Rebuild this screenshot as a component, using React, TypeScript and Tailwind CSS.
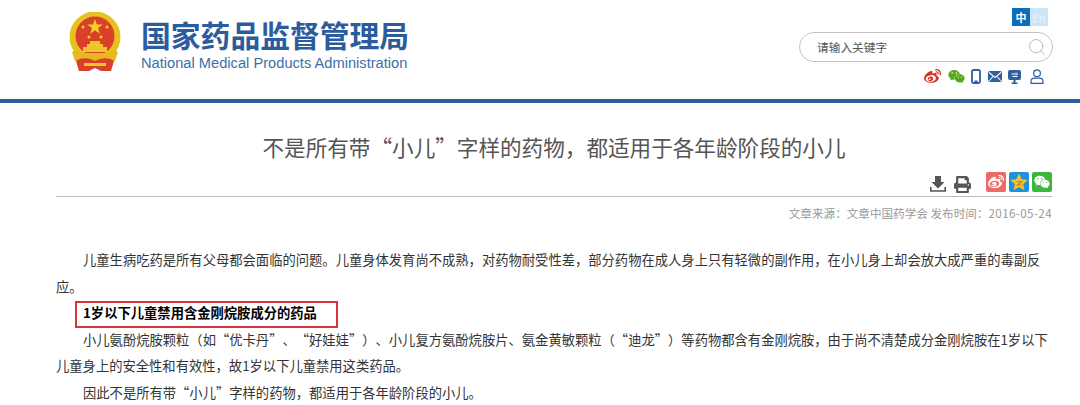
import React from 'react';
import { FaWeibo, FaWeixin, FaPrint } from 'react-icons/fa';
import { Search } from 'lucide-react';

const cjk = "font-['Noto_Sans_CJK_SC','Liberation_Sans',sans-serif]";

const Emblem = () => (
  <svg width="54" height="60" viewBox="0 0 54 60">
    <circle cx="26" cy="25" r="25.5" fill="#e6c21f" />
    <circle cx="26" cy="24" r="19.5" fill="#d8402a" />
    <path d="M26 7l1.900 5.600h5.900l-4.800 3.500 1.800 5.600-4.800-3.500-4.800 3.500 1.800-5.600-4.800-3.500h5.900z" fill="#f3d02c" />
    <circle cx="14" cy="15" r="1.500" fill="#f3d02c" />
    <circle cx="38" cy="15" r="1.500" fill="#f3d02c" />
    <circle cx="20" cy="25" r="1.500" fill="#f3d02c" />
    <circle cx="32" cy="25" r="1.500" fill="#f3d02c" />
    <path d="M21 29h10v3h3v3h4v5H14v-5h4v-3h3z" fill="#efc62a" />
    <path d="M12 41h28l3-4 6 3-3 9H6L3 40l6-3z" fill="#e8b820" />
    <path d="M7 49c6-4 13-3 19 0 6-3 13-4 19 0l-3 10H32l-6-3-6 3H10z" fill="#d8402a" />
    <path d="M15 51h22v3H15z" fill="#efc62a" />
  </svg>
);

const MobileIcon = () => (
  <svg width="10" height="15" viewBox="0 0 10 15">
    <rect x="1" y="1" width="8" height="13" rx="1.500" fill="none" stroke="#2f5f9e" strokeWidth="1.800" />
    <rect x="3.500" y="11.500" width="3" height="1.500" fill="#2f5f9e" />
  </svg>
);

const MailIcon = () => (
  <svg width="14" height="11" viewBox="0 0 14 11">
    <rect width="14" height="11" rx="2" fill="#2f5f9e" />
    <path d="M1 1.500l6 5 6-5M1 10l4-4.500M13 10L9 5.500" fill="none" stroke="#fff" strokeWidth="1.100" />
  </svg>
);

const ScreenIcon = () => (
  <svg width="13" height="14" viewBox="0 0 13 14">
    <rect width="13" height="10" rx="2" fill="#2f5f9e" />
    <path d="M3.500 4h5M8 2.500L9.500 4 8 5.500M9.500 6.500h-5" fill="none" stroke="#fff" strokeWidth="1" />
    <path d="M5.500 10h2v2.500h2V14h-6v-1.500h2z" fill="#2f5f9e" />
  </svg>
);

const UserIcon = () => (
  <svg width="14" height="15" viewBox="0 0 14 15">
    <circle cx="7" cy="4.200" r="3.400" fill="none" stroke="#2f5f9e" strokeWidth="1.200" />
    <path d="M1 14.300v-1.800c0-2 1.600-3.300 3.500-3.300h5c1.900 0 3.500 1.300 3.500 3.300v1.800z" fill="none" stroke="#2f5f9e" strokeWidth="1.200" />
  </svg>
);

const DownloadIcon = () => (
  <svg width="16" height="16" viewBox="0 0 16 16">
    <path d="M5 0h6v6h3.500L8 12.500 1.500 6H5z" fill="#555" />
    <path d="M0.800 11v4h14.400v-4" fill="none" stroke="#555" strokeWidth="1.600" />
  </svg>
);

const QzoneIcon = () => (
  <svg width="20" height="20" viewBox="0 0 20 20">
    <path d="M10 1.500l2.600 5.700 6.200.7-4.600 4.200 1.200 6.100L10 15.200l-5.400 3 1.200-6.100L1.200 7.900l6.200-.7z" fill="#f2c230" />
    <path d="M7.500 9.500h5l-4 3.500h4.500" fill="none" stroke="#c8861c" strokeWidth="1.200" />
  </svg>
);

export default function App() {
  return (
    <div className={`w-[1080px] h-[405px] overflow-hidden bg-white ${cjk}`}>
      {/* Header */}
      <header className="h-[103px] border-b-4 border-[#2f5f9e] pl-[69px] pr-[27px] flex justify-between">
        <div className="flex items-start pt-[12px]">
          <Emblem />
          <div className="ml-[18px] -mt-[1px]">
            <div className="text-[29.800px] leading-[46px] font-bold text-[#2b5c9e] whitespace-nowrap">国家药品监督管理局</div>
            <div className="font-['Liberation_Sans',sans-serif] text-[14.670px] leading-[17px] mt-[-2px] text-[#3d6fa8] whitespace-nowrap">National Medical Products Administration</div>
          </div>
        </div>
        <div className="w-[254px] flex flex-col items-end pt-[8px]">
          <div className="flex mr-[5px] text-[11px] leading-[18px] text-center text-white">
            <span className="w-[18px] h-[18px] bg-[#0a6ebd] font-bold">中</span>
            <span className="w-[18px] h-[18px] bg-[#cde6f7] text-[#e6f3fb]">En</span>
          </div>
          <div className="mt-[6px] w-[254px] h-[30px] rounded-full border border-[#c4c4c4] flex items-center justify-between pl-[17px] pr-[5px]">
            <span className="text-[11.700px] text-[#555]">请输入关键字</span>
            <Search size={20} strokeWidth={1.100} className="text-[#b5b5b5]" />
          </div>
          <div className="mt-[6px] mr-[9px] flex items-center">
            <FaWeibo size={17} className="text-[#d8302a]" />
            <FaWeixin size={17} className="ml-[7px] text-[#55a81c]" />
            <span className="ml-[6px] flex"><MobileIcon /></span>
            <span className="ml-[7px] flex"><MailIcon /></span>
            <span className="ml-[6px] flex"><ScreenIcon /></span>
            <span className="ml-[9px] flex"><UserIcon /></span>
          </div>
        </div>
      </header>

      {/* Article */}
      <main className="mx-[56px] w-[996px]">
        <h1 className="mt-[27px] text-center text-[21.600px] leading-[34px] font-normal text-[#555]">
          不是所有带“小儿”字样的药物，都适用于各年龄阶段的小儿
        </h1>
        <div className="mt-[8px] h-[25px] border-b border-[#bdbdbd] flex justify-end">
          <div className="flex items-start gap-[8px] mr-[15px] pt-[4px]">
            <DownloadIcon />
            <FaPrint size={17} className="text-[#555]" />
          </div>
          <div className="flex gap-[3px] h-[20px]">
            <span className="w-[20px] h-[20px] rounded-[2px] bg-[#ee6a66] flex items-center justify-center">
              <FaWeibo size={16} className="text-white" />
            </span>
            <span className="w-[20px] h-[20px] rounded-[2px] bg-[#1f8fe0] flex items-center justify-center">
              <QzoneIcon />
            </span>
            <span className="w-[20px] h-[20px] rounded-[2px] bg-[#3cb83c] flex items-center justify-center">
              <FaWeixin size={16} className="text-white" />
            </span>
          </div>
        </div>
        <div className="mt-[6px] text-right text-[11.600px] leading-[20px] text-[#999]">
          文章来源：文章中国药学会 发布时间：<span className="tracking-[0.400px]">2016-05-24</span>
        </div>
        <article className="mt-[24px] text-[13.300px] leading-[26.600px] text-[#333] [text-spacing-trim:space-all]">
          <p className="indent-[27px]">
            儿童生病吃药是所有父母都会面临的问题。儿童身体发育尚不成熟，对药物耐受性差，部分药物在成人身上只有轻微的副作用，在小儿身上却会放大成严重的毒副反应。
          </p>
          <p className="relative indent-[27px] font-bold text-black">
            1岁以下儿童禁用含金刚烷胺成分的药品
            <span className="absolute left-[19px] top-[1px] w-[263px] h-[27px] border-2 border-[#d8343a]" />
          </p>
          <p className="indent-[27px]">
            小儿氨酚烷胺颗粒（如“优卡丹”、“好娃娃”）、小儿复方氨酚烷胺片、氨金黄敏颗粒（“迪龙”）等药物都含有金刚烷胺，由于尚不清楚成分金刚烷胺在1岁以下儿童身上的安全性和有效性，故1岁以下儿童禁用这类药品。
          </p>
          <p className="indent-[27px]">因此不是所有带“小儿”字样的药物，都适用于各年龄阶段的小儿。</p>
        </article>
      </main>
    </div>
  );
}
